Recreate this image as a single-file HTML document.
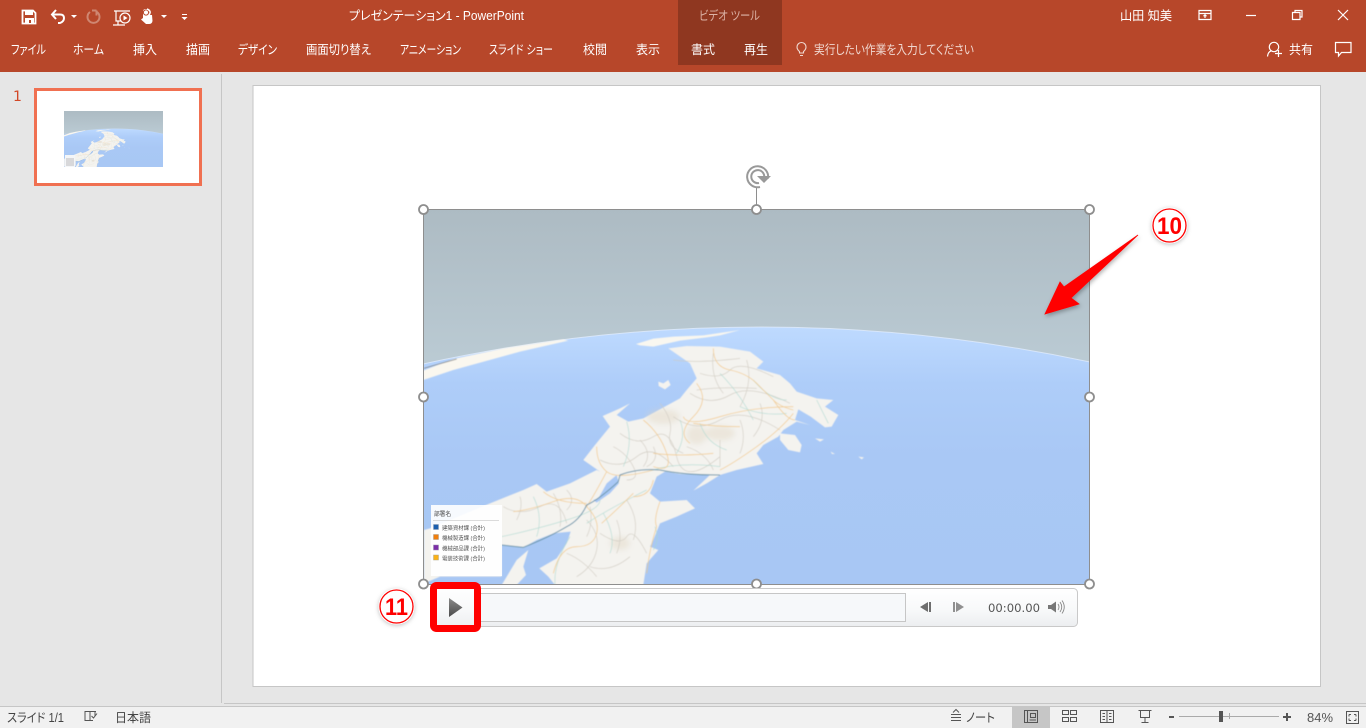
<!DOCTYPE html>
<html lang="ja">
<head>
<meta charset="utf-8">
<title>プレゼンテーション1 - PowerPoint</title>
<style>
html,body{margin:0;padding:0;width:1366px;height:728px;overflow:hidden;background:#e6e6e6}
svg{display:block;position:absolute;left:0;top:0}
text{font-family:"Liberation Sans","Noto Sans CJK JP",sans-serif;font-size:12.5px;font-feature-settings:"palt"}
.w{fill:#fff}
.s{fill:#444}
.ic{fill:none;stroke:#fff;stroke-width:1.2}
.st{fill:none;stroke:#555;stroke-width:1}
</style>
</head>
<body>
<svg width="1366" height="728" viewBox="0 0 1366 728" xmlns="http://www.w3.org/2000/svg">
<defs>
<linearGradient id="sky" x1="0" y1="0" x2="0" y2="1"><stop offset="0" stop-color="#adbbc3"/><stop offset=".4" stop-color="#bacad3"/><stop offset="1" stop-color="#bacad3"/></linearGradient>
<linearGradient id="sea" x1="0" y1="0" x2="0" y2="1"><stop offset="0" stop-color="#bedaff"/><stop offset=".22" stop-color="#aecdf9"/><stop offset=".5" stop-color="#a9c8f5"/><stop offset="1" stop-color="#a8c7f4"/></linearGradient>
<linearGradient id="bar" x1="0" y1="0" x2="0" y2="1"><stop offset="0" stop-color="#ffffff"/><stop offset=".55" stop-color="#f8f9fa"/><stop offset="1" stop-color="#eceef0"/></linearGradient>
<linearGradient id="tri" x1="0" y1="0" x2="0" y2="1"><stop offset="0" stop-color="#8a8a8a"/><stop offset="1" stop-color="#4a4a4a"/></linearGradient>
<filter id="soft" x="-2%" y="-2%" width="104%" height="104%"><feGaussianBlur stdDeviation="1.800"/></filter>
<filter id="soft2"><feGaussianBlur stdDeviation="8"/></filter>
<filter id="lg"><feGaussianBlur stdDeviation=".25"/></filter>
<filter id="sh" x="-30%" y="-30%" width="160%" height="160%"><feDropShadow dx="1" dy="2" stdDeviation="2" flood-color="#000" flood-opacity=".3"/></filter>
<filter id="sh2" x="-30%" y="-30%" width="160%" height="160%"><feDropShadow dx="0" dy="1" stdDeviation="2" flood-color="#000" flood-opacity=".25"/></filter>
<symbol id="map" viewBox="423 209 667 376" preserveAspectRatio="none">
<rect x="423" y="209" width="667" height="376" fill="url(#sky)"/>
<path d="M423 364Q756 291 1090 362V585H423Z" fill="url(#sea)"/>
<path d="M423 364Q756 291 1090 362" fill="none" stroke="#e6f0ff" stroke-width="1" opacity=".7"/>
<g filter="url(#soft)" transform="translate(420 320) scale(.33333)">
<path d="M10 152L100 117 250 85 430 58 445 62 300 95 100 150 10 180Z" fill="#faf7ef"/>
<path d="M12 145L110 117" stroke="#777" stroke-width="2" fill="none"/>
<path d="M648 72L700 56 760 50 850 46 960 30 900 46 860 52 780 62 700 80 660 76Z" fill="#f9f7f0"/>
<path d="M745 85L800 78 900 80 990 95 1030 125 1010 145 1080 165 1110 190 1130 215 1190 235 1240 240 1215 260 1255 285 1235 320 1215 322 1172 290 1135 268 1125 300 1170 315 1130 305 1090 330 1075 350 1030 375 1010 400 1030 432 950 450 900 465 860 490 820 512 870 465 780 462 735 455 710 470 690 520 720 545 800 540 825 565 770 590 720 610 700 660 690 680 715 690 680 730 670 795 405 795 385 770 358 745 410 715 440 670 452 635 400 640 350 660 310 682 245 675 245 770 60 770 12 790 12 630 30 625 210 550 310 510 350 492 380 515 450 490 530 450 540 455 490 420 525 375 570 320 548 288 600 265 630 250 590 285 625 305 670 295 780 235 800 210 830 175 810 130Z" fill="#f4f3ef"/>
<path d="M535 535L560 490 590 465 597 490 570 520 530 548 520 540Z" fill="#a9c8f5"/>
<path d="M730 470L760 495 790 480 770 470Z" fill="#a9c8f5"/>
<path d="M245 795L290 720 325 690 310 740 318 765 290 795Z" fill="#f4f3ef"/>
<path d="M1080 340L1125 345 1145 375 1140 397 1105 390 1080 360Z" fill="#f4f3ef"/>
<path d="M715 185L730 190 745 180 752 195 735 208 716 198Z" fill="#f4f3ef"/>
<path d="M1185 355L1212 358 1200 365Z M1315 410L1332 412 1325 418Z M1232 395L1245 402 1236 402Z" fill="#f4f3ef"/>
<g filter="url(#soft2)" fill="#dfd3bf" opacity=".4"><ellipse cx="730" cy="290" rx="50" ry="22"/><ellipse cx="900" cy="340" rx="45" ry="22"/><ellipse cx="830" cy="345" rx="30" ry="28"/><ellipse cx="600" cy="670" rx="30" ry="20"/></g>
<g fill="none" stroke="#cfcac0" stroke-width="2.200" opacity=".8">
<path d="M840 160Q900 180 930 150T1060 170"/><path d="M810 220Q870 260 930 225T1110 250"/><path d="M760 290Q830 340 900 300T1080 330"/><path d="M600 340Q650 380 700 350T770 410 900 410"/><path d="M540 420Q600 450 650 410T760 440"/><path d="M900 360V440"/><path d="M660 360Q700 400 670 440"/><path d="M510 560Q520 610 500 650"/><path d="M400 520Q430 570 420 620"/><path d="M250 560Q300 590 360 560T440 610"/><path d="M540 640Q600 680 620 650T680 700"/><path d="M510 740Q570 760 630 710"/><path d="M590 600Q610 650 590 700"/><path d="M880 100Q870 170 910 220"/><path d="M980 120Q1000 190 960 260"/><path d="M500 600Q540 640 530 690T470 770"/>
<path d="M760 120Q830 130 960 115"/><path d="M830 210Q900 200 1010 205"/><path d="M720 250Q760 300 750 340T790 400"/><path d="M960 300Q980 350 960 400"/><path d="M1020 250Q1040 300 1000 350"/><path d="M580 380Q620 400 640 440T620 480"/><path d="M440 510Q470 540 440 570"/><path d="M300 530Q310 560 290 600"/><path d="M620 540Q660 600 640 660"/><path d="M440 700Q490 720 530 770"/><path d="M800 380Q860 400 880 450"/><path d="M700 380Q720 420 680 440"/></g>
<g fill="none" stroke="#a9d8cf" stroke-width="2.200" opacity=".75">
<path d="M620 305Q640 370 610 440"/><path d="M840 310Q860 370 920 390"/><path d="M700 450Q780 425 900 440"/><path d="M245 650Q340 630 440 600T540 540"/><path d="M340 530Q370 590 350 650"/><path d="M500 610Q560 570 680 510"/><path d="M405 795Q400 730 450 650"/><path d="M705 620Q720 660 700 690"/><path d="M1000 180Q1050 240 1100 240"/><path d="M1190 240Q1210 280 1225 310"/><path d="M900 160Q960 220 1000 300"/><path d="M550 580Q590 650 570 700"/><path d="M780 300Q800 350 770 400"/><path d="M960 260Q1030 290 1100 280"/></g>
<g fill="none" stroke="#f2c98a" stroke-width="2.500" opacity=".85">
<path d="M880 85Q880 140 930 150T1010 190 1060 240 1120 270"/><path d="M830 190Q870 240 820 290T810 370"/><path d="M1120 260Q1000 260 900 290T790 290"/><path d="M1120 280Q1080 330 1010 380T900 450"/><path d="M670 300Q720 340 740 400T700 440"/><path d="M530 380Q530 430 560 455T700 450"/><path d="M560 455Q520 530 500 560"/><path d="M640 520Q590 570 545 610"/><path d="M700 480Q690 530 640 530"/><path d="M720 545Q700 600 710 620 690 680 680 760"/><path d="M280 575Q330 570 400 545T500 560"/><path d="M500 560Q540 600 530 640T470 680 400 760"/><path d="M370 515Q410 550 500 550"/><path d="M820 310Q880 320 960 320"/><path d="M1060 240Q1100 300 1125 300"/><path d="M700 400Q780 410 880 400"/></g>
<path d="M245 675L310 682Q390 650 440 620 480 600 500 555 535 540 595 485L600 465Q650 445 720 450 790 465 900 465" fill="none" stroke="#6d97ad" stroke-width="3"/>
</g>
</symbol>
</defs>

<!-- title bar / ribbon -->
<rect width="1366" height="72" fill="#b7472a"/>
<rect x="678" width="104" height="65" fill="#8f3720"/>

<!-- QAT icons -->
<path d="M22.500 10.500H33L35.500 13V23.500H22.500Z" fill="none" stroke="#fff" stroke-width="1.800"/>
<rect x="25" y="10" width="8" height="5" fill="#fff"/><rect x="25" y="18" width="9" height="5" fill="#fff"/><rect x="29" y="20" width="2" height="3" fill="#b7472a"/>
<path d="M56 10L52 14.500 56 19M53 14.500H60Q64 14.500 64 18T60 23H58" fill="none" stroke="#fff" stroke-width="2"/>
<path d="M71 15H77L74 18Z" fill="#fff"/>
<path d="M90 11.500A6 6 0 1 0 97 11.500M96.500 10V15M96.500 10H92" fill="none" stroke="#cf8772" stroke-width="2" transform="translate(0 .5)"/>
<path d="M114 11H130M116 11V21H123M118 21V25M113 25H125" fill="none" stroke="#fff" stroke-width="1.200"/>
<circle cx="125" cy="18" r="5" fill="#b7472a" stroke="#fff" stroke-width="1.200"/><path d="M123.500 15.500L127.500 18 123.500 20.500Z" fill="#fff"/>
<path d="M143 18V11.500Q143 9 146 9T149 11.500V15H152L152.500 21Q152 24 149 24H146L141 19.500Z" fill="#fff"/><circle cx="146" cy="12.500" r="2.600" fill="none" stroke="#b7472a"/><path d="M147 9Q152 11 149 15" fill="none" stroke="#fff" stroke-width="1.500"/>
<path d="M161 15H167L164 18Z" fill="#fff"/>
<path d="M182 14H187V15H182ZM181.500 17H187.500L184.500 20Z" fill="#fff"/>

<text class="w" x="349" y="20" textLength="175" lengthAdjust="spacingAndGlyphs">プレゼンテーション1  -  PowerPoint</text>
<text x="699" y="20" textLength="61" lengthAdjust="spacingAndGlyphs" fill="#dcb3a6">ビデオ ツール</text>
<text class="w" x="1120" y="20" textLength="52" lengthAdjust="spacingAndGlyphs">山田 知美</text>

<!-- window controls -->
<path d="M1199 10.500H1211V19.500H1199ZM1199 13.500H1211M1205 18V15M1203.500 16.200L1205 14.800 1206.500 16.200" class="ic"/>
<path d="M1246 15.500H1256" class="ic"/>
<path d="M1292.500 12.500H1300V19.500H1292.500ZM1295 12.500V10.500H1302V17H1300" class="ic"/>
<path d="M1338 10L1348 20M1348 10L1338 20" class="ic"/>

<!-- tabs -->
<g class="tabs">
<text class="w" x="11" y="54" textLength="35" lengthAdjust="spacingAndGlyphs">ファイル</text>
<text class="w" x="73" y="54" textLength="31" lengthAdjust="spacingAndGlyphs">ホーム</text>
<text class="w" x="133" y="54" textLength="24" lengthAdjust="spacingAndGlyphs">挿入</text>
<text class="w" x="186" y="54" textLength="24" lengthAdjust="spacingAndGlyphs">描画</text>
<text class="w" x="238" y="54" textLength="39" lengthAdjust="spacingAndGlyphs">デザイン</text>
<text class="w" x="306" y="54" textLength="65" lengthAdjust="spacingAndGlyphs">画面切り替え</text>
<text class="w" x="400" y="54" textLength="61" lengthAdjust="spacingAndGlyphs">アニメーション</text>
<text class="w" x="489" y="54" textLength="64" lengthAdjust="spacingAndGlyphs">スライド ショー</text>
<text class="w" x="583" y="54" textLength="24" lengthAdjust="spacingAndGlyphs">校閲</text>
<text class="w" x="636" y="54" textLength="24" lengthAdjust="spacingAndGlyphs">表示</text>
<text class="w" x="691" y="54" textLength="24" lengthAdjust="spacingAndGlyphs">書式</text>
<text class="w" x="744" y="54" textLength="24" lengthAdjust="spacingAndGlyphs">再生</text>
<text x="814" y="54" textLength="160" lengthAdjust="spacingAndGlyphs" fill="#f0d8d0">実行したい作業を入力してください</text>
<text class="w" x="1289" y="54" textLength="24" lengthAdjust="spacingAndGlyphs">共有</text>
</g>
<path d="M799.500 51.500Q797 49.500 797 47A4.500 4.500 0 0 1 806 47Q806 49.500 803.500 51.500V53H799.500ZM800 55.500H803" fill="none" stroke="#f0d8d0" stroke-width="1.100"/>
<circle cx="1274" cy="47" r="4.700" class="ic"/>
<path d="M1267.500 56.500Q1268 52 1271 51M1275 53.500H1282M1278.500 50V57" class="ic"/>
<path d="M1335.500 42.500H1351V52.500H1341.500L1338.500 56V52.500H1335.500Z" class="ic"/>

<!-- thumbnail pane -->
<rect x="221" y="74" width="1" height="629" fill="#c6c6c6"/>
<text x="13" y="101" style="font-size:14px;font-family:'DejaVu Sans',sans-serif" fill="#d24726">1</text>
<rect x="35.500" y="89.500" width="165" height="95" fill="#fff" stroke="#f07051" stroke-width="3"/>
<use href="#map" x="64" y="111" width="99" height="56"/>
<rect x="65" y="155" width="10" height="12" fill="#f4f6f8"/>
<path d="M66 159H74M66 161H74M66 163H74M66 165H74" stroke="#a8a8a8" stroke-width=".8"/>

<!-- slide -->
<rect x="253" y="85.500" width="1067.500" height="601" fill="#fff" stroke="#c6c6c6"/>

<!-- video -->
<use href="#map" x="423" y="209" width="667" height="376"/>
<rect x="423.500" y="209.500" width="666" height="375" fill="none" stroke="#8e8e8e"/>

<!-- legend -->
<rect x="431" y="505" width="71" height="71" fill="#fff" opacity=".9"/>
<g filter="url(#lg)">
<text x="434" y="516" style="font-size:6px" fill="#444" textLength="17" lengthAdjust="spacingAndGlyphs">部署名</text>
<rect x="433" y="520" width="66" height=".7" fill="#ccc"/>
<rect x="433.500" y="524.500" width="5" height="5" fill="#1f5fae" stroke="#8a9ab0" stroke-width=".5"/>
<rect x="433.500" y="534.500" width="5" height="5" fill="#f07f09" stroke="#a89a8a" stroke-width=".5"/>
<rect x="433.500" y="545" width="5" height="5" fill="#7b2fa8" stroke="#9a8aaa" stroke-width=".5"/>
<rect x="433.500" y="555" width="5" height="5" fill="#fbb114" stroke="#b0a88a" stroke-width=".5"/>
<text x="442" y="530" style="font-size:5.500px" fill="#555" textLength="43" lengthAdjust="spacingAndGlyphs">建築資材課 (合計)</text>
<text x="442" y="540" style="font-size:5.500px" fill="#555" textLength="43" lengthAdjust="spacingAndGlyphs">機械製造課 (合計)</text>
<text x="442" y="550.500" style="font-size:5.500px" fill="#555" textLength="43" lengthAdjust="spacingAndGlyphs">機械部品課 (合計)</text>
<text x="442" y="560.500" style="font-size:5.500px" fill="#555" textLength="43" lengthAdjust="spacingAndGlyphs">電装技術課 (合計)</text>
</g>

<!-- handles -->
<path d="M756.500 187V205" stroke="#8e8e8e"/>
<g fill="#fff" stroke="#8e8e8e" stroke-width="1.800">
<circle cx="423.500" cy="209.500" r="4.500"/><circle cx="756.500" cy="209.500" r="4.500"/><circle cx="1089.500" cy="209.500" r="4.500"/>
<circle cx="423.500" cy="397" r="4.500"/><circle cx="1089.500" cy="397" r="4.500"/>
<circle cx="756.500" cy="584" r="4.500"/><circle cx="1089.500" cy="584" r="4.500"/>
</g>
<path d="M768 178.500A10.500 10.500 0 1 0 760 187M764 178.500A6.500 6.500 0 1 0 759 183" fill="none" stroke="#999" stroke-width="2"/>
<path d="M757 176H771L764 183Z" fill="#999"/>

<!-- media bar -->
<rect x="433.500" y="588.500" width="644" height="38" rx="4" fill="url(#bar)" stroke="#c9c9c9"/>
<rect x="480.500" y="593.500" width="425" height="28" fill="#f6f8fa" stroke="#c6c6c6"/>
<path d="M920 607L928 602V612ZM929 602H931V612H929Z" fill="#6e6e6e"/>
<path d="M953 602H955V612H953ZM956 602L964 607 956 612Z" fill="#909090"/>
<text x="988" y="612" style="font-size:11.500px;font-family:'DejaVu Sans',sans-serif" fill="#555" textLength="52" lengthAdjust="spacingAndGlyphs">00:00.00</text>
<path d="M1048 605H1051L1056 601.500V612.500L1051 609H1048Z" fill="#777"/>
<path d="M1058 604Q1060 607 1058 610M1060 602Q1063.500 607 1060 612M1062 600.500Q1066.500 607 1062 613.500" fill="none" stroke="#888" stroke-width=".9"/>

<!-- play button highlight -->
<rect x="433.500" y="585.500" width="44" height="43" rx="3" fill="url(#bar)" stroke="#f00" stroke-width="7"/>
<path d="M449 598L462.500 607.500 449 617Z" fill="url(#tri)"/>
<circle cx="423.500" cy="584" r="4.500" fill="#fff" stroke="#8e8e8e" stroke-width="1.800"/>

<!-- callouts -->
<path d="M1138 235L1064 287 1060 282 1045 314 1079 304 1071 298Z" fill="#f00" stroke="#f00" stroke-width=".8" filter="url(#sh)"/>
<circle cx="1169.500" cy="225.500" r="18" fill="#fff" filter="url(#sh2)"/>
<circle cx="1169.500" cy="225.500" r="16.500" fill="none" stroke="#f00" stroke-width="1.300"/>
<text x="1169.500" y="234" text-anchor="middle" style="font-size:24px;font-weight:bold" fill="#f00" textLength="25" lengthAdjust="spacingAndGlyphs">10</text>
<circle cx="396.500" cy="606.500" r="18" fill="#fff" filter="url(#sh2)"/>
<circle cx="396.500" cy="606.500" r="16.500" fill="none" stroke="#f00" stroke-width="1.300"/>
<text x="396.500" y="615" text-anchor="middle" style="font-size:24px;font-weight:bold" fill="#f00" textLength="23" lengthAdjust="spacingAndGlyphs">11</text>

<!-- status bar -->
<rect x="224" y="703" width="1142" height="1" fill="#c6c6c6"/>
<rect y="706" width="1366" height="22" fill="#f1f1f1"/>
<rect y="706" width="1366" height="1" fill="#c6c6c6"/>
<text class="s" x="7" y="722" textLength="57" lengthAdjust="spacingAndGlyphs">スライド 1/1</text>
<path d="M85 711.500H90V720.500H85ZM90 711.500H96M90 720.500H93M95 711.500V716M91.500 716L93.500 718 97 713.500" class="st"/>
<text class="s" x="115" y="722" textLength="36" lengthAdjust="spacingAndGlyphs">日本語</text>
<path d="M951 714.500H961M951 717.500H961M951 720.500H961M953 712.500L956 709.500 959 712.500" class="st"/>
<text class="s" x="966" y="722" textLength="29" lengthAdjust="spacingAndGlyphs">ノート</text>
<rect x="1012" y="707" width="38" height="21" fill="#c6c6c6"/>
<path d="M1024.500 710.500H1037.500V722.500H1024.500ZM1027.500 710.500V722.500M1030.500 713.500H1035.500V717.500H1030.500ZM1029.500 720H1036" class="st"/>
<path d="M1062.500 710.500H1068.500V714.500H1062.500ZM1070.500 710.500H1076.500V714.500H1070.500ZM1062.500 717.500H1068.500V721.500H1062.500ZM1070.500 717.500H1076.500V721.500H1070.500Z" class="st"/>
<path d="M1100.500 710.500H1113.500V722.500H1100.500ZM1107 710.500V722.500M1102.500 713.500H1105M1102.500 716.500H1105M1102.500 719.500H1105M1109 713.500H1111.500M1109 716.500H1111.500M1109 719.500H1111.500" class="st"/>
<path d="M1138.500 710.500H1151.500M1140.500 710.500V717.500H1149.500V710.500M1145 717.500V722M1141.500 722.500H1148.500" class="st"/>
<rect x="1169" y="716" width="5" height="2" fill="#555"/>
<rect x="1179" y="716" width="100" height="1" fill="#aaa"/>
<rect x="1229" y="713" width="1" height="6" fill="#aaa"/>
<rect x="1219" y="711" width="4" height="11" fill="#555"/>
<path d="M1283 717H1291M1287 713V721" stroke="#555" stroke-width="2"/>
<text x="1307" y="722" fill="#555" textLength="26" lengthAdjust="spacingAndGlyphs">84%</text>
<path d="M1346.500 711.500H1358.500V723.500H1346.500ZM1349 714.500H1351M1349 714.500V716.500M1356 714.500H1354M1356 714.500V716.500M1349 720.500H1351M1349 720.500V718.500M1356 720.500H1354M1356 720.500V718.500" class="st"/>
</svg>
</body>
</html>
